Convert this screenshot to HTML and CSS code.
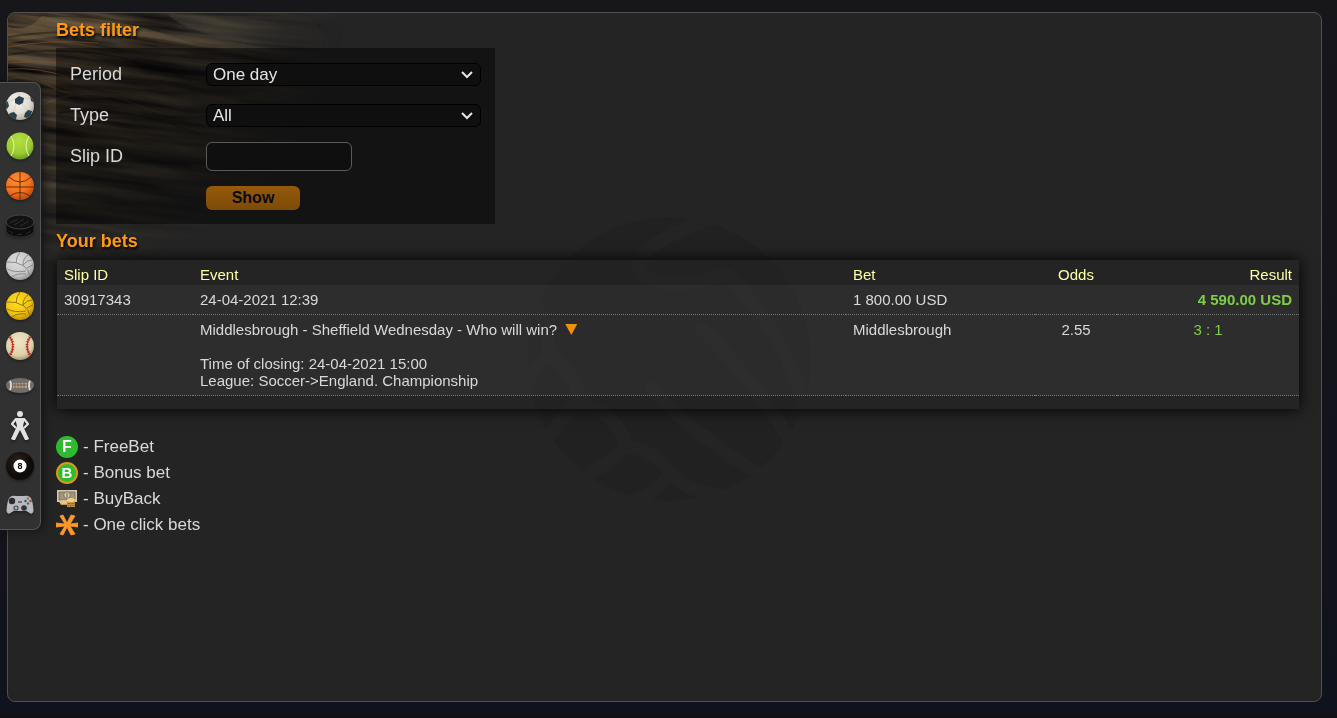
FILE: index.html
```html
<!DOCTYPE html>
<html lang="en">
<head>
  <meta charset="UTF-8">
  <meta name="viewport" content="width=device-width, initial-scale=1.0">
  <title>Bets history</title>
  <link rel="stylesheet" href="styles.css">
</head>
<body>
  <nav class="sports">
    <a href="#soccer" aria-label="Soccer">
      <svg viewBox="0 0 30 30">
        <defs>
          <radialGradient id="g-soccer" cx="40%" cy="35%" r="65%"><stop offset="0" stop-color="#f7f4ec"/><stop offset="0.7" stop-color="#dedad0"/><stop offset="1" stop-color="#b3aea3"/></radialGradient>
          <clipPath id="c-ball"><circle cx="15" cy="15" r="14"/></clipPath>
        </defs>
        <circle cx="15" cy="15" r="14" fill="url(#g-soccer)"/>
        <g clip-path="url(#c-ball)">
          <path d="M14 5V0M18 8l8-1M10 8l-8 3M11 13l-3 9M17 13l6 7M10 24h13" stroke="#c6c1b6" stroke-width="0.6" fill="none"/>
          <path d="M10 8l4-3 5 2-1 5-4 2-4-2zM0 9l3 2 1 4-2 3-3-1zM25 4l5 4v4l-4-2zM5 22l4-1 3 3-1 4-4 1-4-4zM20 22l3-3 4 1-1 4-4 3-3-1z" fill="#28404e"/>
        </g>
      </svg>
    </a>
    <a href="#tennis" aria-label="Tennis">
      <svg viewBox="0 0 30 30">
        <defs><radialGradient id="g-tennis" cx="45%" cy="30%" r="65%"><stop offset="0" stop-color="#b3e040"/><stop offset="0.75" stop-color="#9bcb31"/><stop offset="1" stop-color="#77a522"/></radialGradient></defs>
        <circle cx="15" cy="15" r="13.500" fill="url(#g-tennis)"/>
        <path d="M6 5q6 10 0 20M24 5q-6 10 0 20" fill="none" stroke="#e9f5bd" stroke-width="0.9"/>
      </svg>
    </a>
    <a href="#basketball" aria-label="Basketball">
      <svg viewBox="0 0 30 30">
        <defs><radialGradient id="g-basket" cx="40%" cy="30%" r="65%"><stop offset="0" stop-color="#ff8b2c"/><stop offset="0.7" stop-color="#f3701f"/><stop offset="1" stop-color="#c9530f"/></radialGradient></defs>
        <circle cx="15" cy="15" r="14" fill="url(#g-basket)"/>
        <path d="M15 1v28M1 16h28M4 6q11 10 22 0M5 25q10-7 20 0" fill="none" stroke="#54280c" stroke-width="0.9"/>
      </svg>
    </a>
    <a href="#hockey" aria-label="Hockey">
      <svg viewBox="0 0 30 30">
        <path d="M1 11v8c0 4 7 7 14 7s14-3 14-7v-8z" fill="#0c0c0c" stroke="#3c3c3c" stroke-width="0.6"/>
        <ellipse cx="15" cy="11" rx="14" ry="7" fill="#121212" stroke="#555" stroke-width="0.7"/>
        <path d="M5 12l8-4M9 14l10-6M15 15l9-5M4 20l4 3M12 24l5-1M21 23l5-3" stroke="#333" stroke-width="0.8"/>
      </svg>
    </a>
    <a href="#volleyball" aria-label="Volleyball">
      <svg viewBox="0 0 30 30">
        <defs><radialGradient id="g-volley" cx="40%" cy="35%" r="65%"><stop offset="0" stop-color="#dcdcdc"/><stop offset="0.75" stop-color="#c6c6c6"/><stop offset="1" stop-color="#9b9b9b"/></radialGradient></defs>
        <circle cx="15" cy="15" r="14" fill="url(#g-volley)"/>
        <path d="M15 1q-4 5-4 11M23 4q-5 3-5 10M2 11q9-1 17 4q5 4 6 10M2 18q8 4 19 2M7 26q5-4 14-3M18 14q4-5 9-5M22 17q3-2 6-3" fill="none" stroke="#7b7b7b" stroke-width="0.8"/>
      </svg>
    </a>
    <a href="#waterpolo" aria-label="Water polo">
      <svg viewBox="0 0 30 30">
        <defs><radialGradient id="g-polo" cx="40%" cy="35%" r="65%"><stop offset="0" stop-color="#ffdf20"/><stop offset="0.7" stop-color="#f0c211"/><stop offset="1" stop-color="#c39406"/></radialGradient></defs>
        <circle cx="15" cy="15" r="14" fill="url(#g-polo)"/>
        <path d="M15 1q-4 5-4 11M23 4q-5 3-5 10M2 11q9-1 17 4q5 4 6 10M2 18q8 4 19 2M7 26q5-4 14-3M18 14q4-5 9-5M22 17q3-2 6-3" fill="none" stroke="#80620a" stroke-width="0.8"/>
      </svg>
    </a>
    <a href="#baseball" aria-label="Baseball">
      <svg viewBox="0 0 30 30">
        <defs><radialGradient id="g-base" cx="45%" cy="35%" r="65%"><stop offset="0" stop-color="#f0e6c5"/><stop offset="0.75" stop-color="#dbd0aa"/><stop offset="1" stop-color="#a89b75"/></radialGradient></defs>
        <circle cx="15" cy="15" r="14" fill="url(#g-base)"/>
        <path d="M5 6q6 9 0 18M25 6q-6 9 0 18" fill="none" stroke="#c3261a" stroke-width="1.200"/>
        <path d="M5 6q6 9 0 18M25 6q-6 9 0 18" fill="none" stroke="#c3261a" stroke-width="3" stroke-dasharray="1 1.500"/>
      </svg>
    </a>
    <a href="#football" aria-label="American football">
      <svg viewBox="0 0 30 30">
        <path d="M1 14q0-3 4-5q5-2 10-2t10 2q4 2 4 5t-4 6q-5 2-10 2t-10-2q-4-2-4-6z" fill="#716d69"/>
        <path d="M5 10q2 4 0 9M25 10q-2 4 0 9" fill="none" stroke="#e4dfd6" stroke-width="1.800"/>
        <path d="M8 12h14v5H8z" fill="#b5a48c"/>
        <path d="M8 14h14M10 12v5M13 12v5M16 12v5M19 12v5" stroke="#5a4838" stroke-width="0.7"/>
      </svg>
    </a>
    <a href="#specials" aria-label="Specials">
      <svg viewBox="0 0 30 30">
        <circle cx="15" cy="3" r="3" fill="#e2e2e2"/>
        <path d="M11 8l-4 5 4 4M19 8l4 5-4 4" fill="none" stroke="#e2e2e2" stroke-width="2.200" stroke-linejoin="round"/>
        <path d="M10 7h10l-2 8 6 13-2 1h-2l-5-10-5 10H8l-2-1 6-13z" fill="#e2e2e2"/>
      </svg>
    </a>
    <a href="#billiards" aria-label="Billiards">
      <svg viewBox="0 0 30 30">
        <defs><radialGradient id="g-pool" cx="40%" cy="35%"><stop offset="0" stop-color="#2b231d"/><stop offset="1" stop-color="#0f0b08"/></radialGradient></defs>
        <circle cx="15" cy="15" r="14" fill="url(#g-pool)"/>
        <circle cx="15" cy="15" r="6.500" fill="#fff"/>
        <text x="15" y="18" class="pool-number">8</text>
      </svg>
    </a>
    <a href="#esports" aria-label="E-sports">
      <svg viewBox="0 0 30 30">
        <path d="M5 6q3-2 6-1h8q3-1 6 1q3 3 3.500 14q-1 4-4 2l-3-2H8.500l-3 2q-3 2-4-2Q2 9 5 6z" fill="#b9b8bf"/>
        <circle cx="7" cy="10" r="3.200" fill="#272d32"/>
        <circle cx="11" cy="17" r="2.600" fill="#48484d"/>
        <circle cx="19" cy="17" r="2.800" fill="#30343a"/>
        <path d="M9.500 17h3M11 15.500v3" stroke="#ededf0" stroke-width="0.8"/>
        <path d="M13 11h4" stroke="#3a3a40" stroke-width="1.200"/>
        <circle cx="23" cy="7.500" r="1.200" fill="#82823b"/><circle cx="20.500" cy="10" r="1.200" fill="#30518b"/><circle cx="25.500" cy="10" r="1.200" fill="#9f3a36"/><circle cx="23" cy="12.500" r="1.200" fill="#3b7b42"/>
      </svg>
    </a>
  </nav>

  <main class="panel">
    <svg class="wood" viewBox="0 0 340 290" preserveAspectRatio="none" aria-hidden="true">
      <defs>
        <filter id="grain" x="0" y="0" width="100%" height="100%" color-interpolation-filters="sRGB">
          <feTurbulence type="fractalNoise" baseFrequency="0.008 0.1" numOctaves="4" seed="8"/>
          <feColorMatrix values="0.7 0.2 0 0 -0.22  0.6 0.2 0 0 -0.21  0.4 0.2 0 0 -0.16  0 0 0 0 1"/>
        </filter>
        <radialGradient id="fade" gradientUnits="userSpaceOnUse" cx="0" cy="0" r="1" gradientTransform="scale(335 270)">
          <stop offset="0" stop-color="#fff"/>
          <stop offset="0.4" stop-color="#bbb"/>
          <stop offset="0.7" stop-color="#666"/>
          <stop offset="1" stop-color="#000"/>
        </radialGradient>
        <mask id="wood-mask"><rect width="340" height="290" fill="url(#fade)"/></mask>
      </defs>
      <g mask="url(#wood-mask)">
        <g transform="rotate(7)"><rect x="-10" y="-50" width="400" height="340" filter="url(#grain)"/></g>
        <path d="M0 14Q20 20 34 3L46 4Q110 2 190 32Q110 18 60 22Q30 25 0 30z" fill="#8a714b" opacity="0.4"/>
        <path d="M160 2Q180 20 240 30L330 36L300 4z" fill="#77705e" opacity="0.3"/>
        <g fill="none">
          <path d="M0 50Q50 44 110 60M0 56Q30 54 60 64M0 34Q40 26 90 30" stroke="#a05c2b" opacity="0.55"/>
          <path d="M0 66Q20 62 44 74T100 84M34 92Q80 70 130 92T220 92" stroke="#7c6243" stroke-width="2" opacity="0.3"/>
          <path d="M0 42Q60 32 120 46M0 24Q70 12 150 30M50 100Q110 90 190 120" stroke="#0b0906" stroke-width="2" opacity="0.4"/>
        </g>
      </g>
    </svg>
    <svg class="watermark" viewBox="83 53 850 850" aria-hidden="true">
      <mask id="seams">
        <circle cx="508" cy="478" r="425" fill="#fff"/>
        <g fill="none" stroke="#000" stroke-width="40" stroke-linecap="round" stroke-linejoin="round">
          <path d="M640 56Q500 105 440 155Q400 195 432 228Q480 260 580 248Q640 238 680 225Q850 380 920 640"/>
          <path d="M606 390Q730 500 870 720L930 790"/>
          <path d="M455 565Q560 690 790 830"/>
          <path d="M100 310Q150 380 148 465Q105 500 75 570"/>
          <path d="M148 465Q240 530 240 610Q190 640 140 730"/>
          <path d="M240 610Q355 640 380 740Q330 790 240 840"/>
          <path d="M380 740Q470 750 512 825Q480 870 410 900"/>
          <path d="M512 825Q570 880 690 890"/>
        </g>
      </mask>
      <circle cx="508" cy="478" r="425" mask="url(#seams)"/>
    </svg>

    <section>
      <h2>Bets filter</h2>
      <form class="filter">
        <div class="field">
          <label for="period">Period</label>
          <div class="select">
            <select id="period">
              <option>One day</option>
              <option>One week</option>
              <option>One month</option>
            </select>
            <svg viewBox="0 0 14 14"><path d="M2 4l5 5 5-5"/></svg>
          </div>
        </div>
        <div class="field">
          <label for="type">Type</label>
          <div class="select">
            <select id="type">
              <option>All</option>
              <option>Won</option>
              <option>Lost</option>
            </select>
            <svg viewBox="0 0 14 14"><path d="M2 4l5 5 5-5"/></svg>
          </div>
        </div>
        <div class="field">
          <label for="slip">Slip ID</label>
          <input id="slip" type="text">
        </div>
        <div class="field actions">
          <button type="submit" class="show">Show</button>
        </div>
      </form>
    </section>

    <section>
      <h2>Your bets</h2>
      <div class="bets">
        <table>
          <colgroup>
            <col class="col-slip">
            <col>
            <col class="col-bet">
            <col class="col-odds">
            <col class="col-result">
          </colgroup>
          <thead>
            <tr>
              <th>Slip ID</th>
              <th>Event</th>
              <th>Bet</th>
              <th class="center">Odds</th>
              <th class="right">Result</th>
            </tr>
          </thead>
          <tbody>
            <tr>
              <td>30917343</td>
              <td>24-04-2021 12:39</td>
              <td>1 800.00 USD</td>
              <td></td>
              <td class="right win">4 590.00 USD</td>
            </tr>
            <tr>
              <td></td>
              <td>
                Middlesbrough - Sheffield Wednesday - Who will win?
                <button type="button" class="toggle" aria-label="Hide details"></button>
                <p>Time of closing: 24-04-2021 15:00<br>League: Soccer-&gt;England. Championship</p>
              </td>
              <td>Middlesbrough</td>
              <td class="center">2.55</td>
              <td class="center score">3 : 1</td>
            </tr>
          </tbody>
        </table>
      </div>
    </section>

    <ul class="legend">
      <li><span class="badge free">F</span>- FreeBet</li>
      <li><span class="badge bonus">B</span>- Bonus bet</li>
      <li>
        <svg viewBox="0 0 22 22">
          <path d="M1 2h20v12H1z" fill="#d3c7ae"/>
          <path d="M3 4h16v8H3z" fill="#a0957e" stroke="#6e654f" stroke-width="0.7"/>
          <circle cx="11" cy="7" r="3.200" fill="#ddd3bb" stroke="#6e654f" stroke-width="0.8"/>
          <path d="M11 5v4" stroke="#5f563f"/>
          <path d="M3 14h8v3H5zM11 12h8v7h-8z" fill="#c99a4b"/>
          <ellipse cx="8" cy="14" rx="4" ry="2" fill="#e6c68a"/>
          <ellipse cx="15" cy="12" rx="4" ry="2" fill="#f2cf86"/>
          <path d="M11 15q4 2 8 0M11 17q4 2 8 0" fill="none" stroke="#765521" stroke-width="0.7"/>
        </svg>
        - BuyBack
      </li>
      <li>
        <svg viewBox="0 0 22 22">
          <path d="M0 9l9 1L4 2l3-1 4 8 4-8 4 1-5 8 8-1v4l-8-1 5 8-4 1-4-8-4 8-3-1 5-8-9 1z" fill="#ff9a2a" stroke="#ff9a2a" stroke-width="0.8"/>
        </svg>
        - One click bets
      </li>
    </ul>
  </main>
</body>
</html>
```

FILE: styles.css
```css
* {
  box-sizing: border-box;
}
body {
  margin: 0;
  padding: 12px 15px 16px 7px;
  min-height: 100vh;
  display: flex;
  background: linear-gradient(#17171a 0, #14141b 50%, #11131c calc(100% - 6px), #120e13 100%);
  color: #d9d9d9;
  font-family: "Liberation Sans", Arial, Helvetica, sans-serif;
  font-size: 17px;
}
.panel {
  position: relative;
  flex: 1;
  min-width: 0;
  padding: 0 22px 24px 48px;
  border: 1px solid #505050;
  border-radius: 8px;
  background-color: #242424;
  overflow: hidden;
}
.wood {
  position: absolute;
  top: 0;
  left: 0;
  width: 340px;
  height: 290px;
}
.watermark {
  position: fixed;
  top: 0;
  right: 0;
  bottom: 0;
  left: 0;
  margin: auto;
  width: 284px;
  height: 284px;
  fill: #212121;
}
section,
.legend {
  position: relative;
}
h2 {
  margin: 0;
  font-size: 18px;
  line-height: 35px;
  color: #ff9912;
  text-shadow: 1px 2px 3px #000;
}

/* sports bar */
.sports {
  position: fixed;
  top: 82px;
  left: 0;
  z-index: 2;
  width: 41px;
  padding: 3px 0;
  border: 1px solid #555;
  border-left: 0;
  border-radius: 0 8px 8px 0;
  background-color: #313131;
  box-shadow: 2px 0 8px #111;
}
.sports a {
  display: flex;
  align-items: center;
  justify-content: center;
  height: 40px;
}
.sports svg {
  width: 30px;
  height: 30px;
  filter: drop-shadow(0 2px 1px #222);
}
.pool-number {
  font-size: 9px;
  font-weight: bold;
  text-anchor: middle;
}

/* filter form */
.filter {
  max-width: 439px;
  padding: 6px 14px;
  background-color: rgba(0, 0, 0, 0.45);
}
.field {
  display: flex;
  align-items: center;
  height: 41px;
}
.field label {
  width: 136px;
  font-size: 18px;
}
.select {
  position: relative;
  flex: 1;
}
.select select {
  display: block;
  width: 100%;
  height: 23px;
  padding: 0 6px;
  appearance: none;
  border: 1px solid #000;
  border-radius: 6px;
  background-color: #0f0f0f;
  color: #e6e6e6;
  font-family: inherit;
  font-size: 17px;
}
.select svg {
  position: absolute;
  top: 5px;
  right: 7px;
  width: 14px;
  height: 14px;
  fill: none;
  stroke: #e6e6e6;
  stroke-width: 2;
  pointer-events: none;
}
.field input {
  width: 146px;
  height: 29px;
  padding: 0 6px;
  border: 1px solid #5a5a5a;
  border-radius: 6px;
  background-color: #0f0f0f;
  color: #e6e6e6;
  font-family: inherit;
  font-size: 17px;
}
.actions {
  padding-left: 136px;
}
.show {
  width: 94px;
  height: 24px;
  padding: 0;
  border: 0;
  border-radius: 6px;
  background: linear-gradient(#95590a, #7c4b0a);
  color: #0c0a06;
  font-family: inherit;
  font-size: 16px;
  font-weight: bold;
  cursor: pointer;
}

/* bets table */
.bets {
  margin: 1px 0 0 1px;
  padding-bottom: 13px;
  background-color: rgba(36, 36, 36, 0.5);
  box-shadow: 0 0 14px #000;
}
table {
  width: 100%;
  table-layout: fixed;
  border-collapse: collapse;
  font-size: 15px;
  line-height: 17px;
}
.col-slip {
  width: 136px;
}
.col-bet {
  width: 189px;
}
.col-odds {
  width: 82px;
}
.col-result {
  width: 182px;
}
th {
  padding: 6px 7px 2px;
  color: #ffffa8;
  font-weight: normal;
  text-align: left;
}
td {
  padding: 6px 7px;
  border-bottom: 1px dotted #777;
  vertical-align: top;
}
tbody tr {
  background-color: rgba(255, 255, 255, 0.045);
}
td p {
  margin: 17px 0 0;
}
.center {
  text-align: center;
}
.right {
  text-align: right;
}
.win {
  color: #7fce48;
  font-weight: bold;
}
.score {
  color: #7fce48;
}
.toggle {
  width: 12px;
  height: 11px;
  margin-left: 4px;
  padding: 0;
  border: 0;
  background-color: #f0900f;
  clip-path: polygon(0 0, 100% 0, 50% 100%);
  cursor: pointer;
}

/* legend */
.legend {
  margin: 25px 0 0;
  padding: 0;
  list-style: none;
}
.legend li {
  display: flex;
  align-items: center;
  gap: 5px;
  height: 26px;
}
.legend svg {
  width: 22px;
  height: 22px;
}
.badge {
  width: 22px;
  border-radius: 50%;
  color: #fff;
  font-size: 16px;
  font-weight: bold;
  line-height: 22px;
  text-align: center;
  background-color: #2fbb30;
}
.bonus {
  border: 2px solid #d99a1b;
  font-size: 15px;
  line-height: 18px;
}
```
